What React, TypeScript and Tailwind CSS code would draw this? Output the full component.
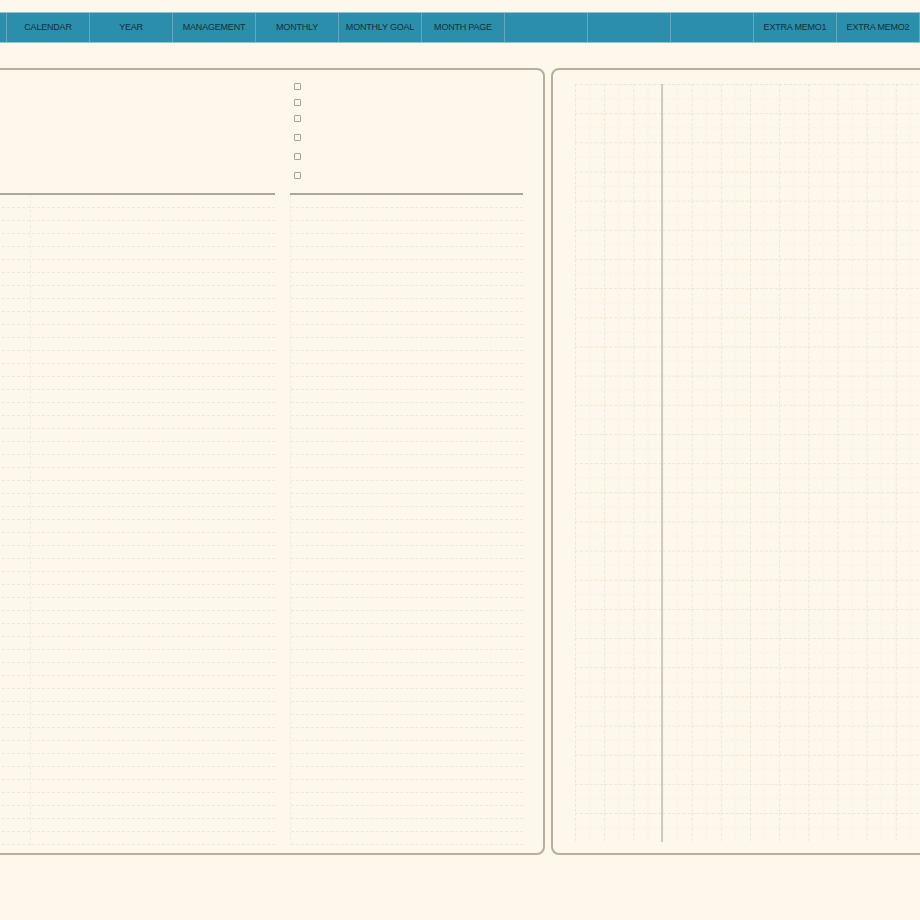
const tabs = [
  "",
  "CALENDAR",
  "YEAR",
  "MANAGEMENT",
  "MONTHLY",
  "MONTHLY GOAL",
  "MONTH PAGE",
  "",
  "",
  "",
  "EXTRA MEMO1",
  "EXTRA MEMO2",
  "",
];

const ROWS = 50;

function TabBar() {
  return (
    <nav className="mt-[12px] h-[31px] flex bg-[#2b8eaa] border-y border-[#8fc3d0] -ml-[76px]">
      {tabs.map((t, i) => (
        <div
          key={i}
          className="w-[83px] shrink-0 h-full border-r border-[#5ea9bd] flex items-center justify-center text-[9px] tracking-[-0.2px] text-[#12303a]"
        >
          {t}
        </div>
      ))}
    </nav>
  );
}

function RuledRows({ margin }: { margin?: boolean }) {
  return (
    <div className="relative">
      {Array.from({ length: ROWS }).map((_, i) => (
        <div key={i} className="h-[13px] border-b border-dashed border-[#f1e8d9]" />
      ))}
      {margin && (
        <div className="absolute top-0 bottom-0 left-[48px] border-l border-dashed border-[#f4ecdf]" />
      )}
    </div>
  );
}

function Checkboxes() {
  const gaps = ["mt-[13px]", "mt-[9px]", "mt-[9px]", "mt-[12px]", "mt-[12px]", "mt-[12px]"];
  return (
    <div className="flex flex-col pl-[4px]">
      {gaps.map((g, i) => (
        <span key={i} className={`${g} w-[7px] h-[7px] rounded-[1px] border border-[#a9a59b]`} />
      ))}
    </div>
  );
}

function NotePanel() {
  return (
    <section className="w-[565px] h-[787px] shrink-0 -ml-[20px] border-2 border-[#b4b09a] rounded-[8px] flex gap-[15px] pr-[20px]">
      <div className="flex-1 flex flex-col">
        <div className="h-[123px]" />
        <div className="h-[2px] bg-[#aba79e]" />
        <RuledRows margin />
      </div>
      <div className="w-[233px] flex flex-col">
        <div className="h-[123px]">
          <Checkboxes />
        </div>
        <div className="h-[2px] bg-[#aba79e]" />
        <div className="border-l border-dashed border-[#f4ecdf]">
          <RuledRows />
        </div>
      </div>
    </section>
  );
}

function GridPanel() {
  const cell = 14.58;
  return (
    <section className="w-[400px] h-[787px] shrink-0 border-2 border-[#b4b09a] rounded-[8px] pl-[22px] pt-[14px]">
      <div className="relative w-[360px] h-[758px]">
        <svg width="360" height="758" className="block">
          <defs>
            <pattern id="grid" width={cell * 2} height={cell * 2} patternUnits="userSpaceOnUse">
              <g strokeDasharray="3 2" fill="none" strokeWidth="1">
                <path d={`M0 ${cell} H${cell * 2} M${cell} 0 V${cell * 2}`} stroke="#f6efe3" />
                <path d={`M0 0.5 H${cell * 2} M0.5 0 V${cell * 2}`} stroke="#f0e6d6" />
              </g>
            </pattern>
          </defs>
          <rect width="360" height="758" fill="url(#grid)" />
        </svg>
        <div className="absolute top-0 bottom-0 left-[86px] w-[2px] bg-[#d0cac0]" />
      </div>
    </section>
  );
}

export default function App() {
  return (
    <div className="w-[920px] h-[920px] overflow-hidden bg-[#fff7eb] font-['Liberation_Sans',Arial,sans-serif]">
      <TabBar />
      <main className="mt-[25px] flex gap-[6px]">
        <NotePanel />
        <GridPanel />
      </main>
    </div>
  );
}
